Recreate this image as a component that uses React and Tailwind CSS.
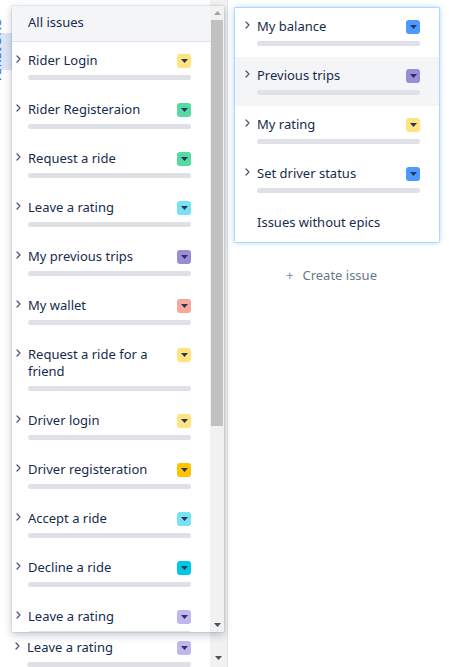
import React from "react";

const leftItems = [
  { title: "Rider Login", color: "bg-[#ffe380]" },
  { title: "Rider Registeraion", color: "bg-[#57d9a3]" },
  { title: "Request a ride", color: "bg-[#57d9a3]" },
  { title: "Leave a rating", color: "bg-[#79e2f2]" },
  { title: "My previous trips", color: "bg-[#998dd9]" },
  { title: "My wallet", color: "bg-[#f7a99c]" },
  { title: "Request a ride for a friend", color: "bg-[#ffe380]" },
  { title: "Driver login", color: "bg-[#ffe380]" },
  { title: "Driver registeration", color: "bg-[#ffc400]" },
  { title: "Accept a ride", color: "bg-[#79e2f2]" },
  { title: "Decline a ride", color: "bg-[#00c7e6]" },
  { title: "Leave a rating", color: "bg-[#c0b6f2]" },
];

const rightItems = [
  { title: "My balance", color: "bg-[#4c9aff]" },
  { title: "Previous trips", color: "bg-[#998dd9]", highlight: true },
  { title: "My rating", color: "bg-[#ffe380]" },
  { title: "Set driver status", color: "bg-[#4c9aff]" },
];

function Chevron() {
  return (
    <svg width="5" height="8" viewBox="0 0 5 8" className="block">
      <path d="M1 1l3 3-3 3" fill="none" stroke="#42526e" strokeWidth="1.2" strokeLinecap="round" strokeLinejoin="round" />
    </svg>
  );
}

function EpicIcon({ color }) {
  return (
    <span className={`mt-[2px] flex h-[14px] w-[14px] shrink-0 items-center justify-center rounded-[3px] ${color}`}>
      <svg width="7" height="4" viewBox="0 0 7 4" className="block">
        <path d="M0 0h7L3.5 4z" fill="#253858" />
      </svg>
    </span>
  );
}

function EpicItem({ title, color, highlight, pad }) {
  return (
    <div className={`flex ${pad} pr-[19px] pt-[10px] pb-[11px] ${highlight ? "bg-[#f4f5f7]" : ""}`}>
      <div className="w-[12px] shrink-0 pt-[3px]">
        <Chevron />
      </div>
      <div className="min-w-0 flex-1">
        <div className="flex items-start justify-between gap-[8px]">
          <span className="leading-[17px] text-[#172b4d]">{title}</span>
          <EpicIcon color={color} />
        </div>
        <div className="mt-[6px] h-[5px] rounded-full bg-[#dfe1e6]" />
      </div>
    </div>
  );
}

function ArrowUp() {
  return (
    <svg width="7" height="4" viewBox="0 0 7 4" className="block">
      <path d="M0 4h7L3.5 0z" fill="#a3a3a3" />
    </svg>
  );
}

function ArrowDown({ fill = "#505050" }) {
  return (
    <svg width="7" height="4" viewBox="0 0 7 4" className="block">
      <path d="M0 0h7L3.5 4z" fill={fill} />
    </svg>
  );
}

export default function App() {
  return (
    <div className="relative flex h-[667px] w-[449px] overflow-hidden bg-white font-['Noto_Sans',sans-serif] text-[13px] text-[#172b4d]">
      {/* background board column */}
      <div className="flex h-full w-[228px] shrink-0">
        <div className="flex min-w-0 flex-1 flex-col overflow-hidden">
          <div className="h-[80px] w-[12px] overflow-hidden bg-[linear-gradient(to_bottom,transparent_33px,#dbe5f6_33px,#dbe5f6_70px,transparent_70px)]">
            <div className="-ml-[9px] mt-[18px] rotate-180 text-[12px] leading-[12px] tracking-[1px] text-[#2f6fd6] [writing-mode:vertical-rl]">
              VERSIONS
            </div>
          </div>
          <div className="flex-1" />
          <div className="-mb-[11px]">
            <EpicItem title="Leave a rating" color="bg-[#c0b6f2]" pad="pl-[15px]" />
          </div>
        </div>
        <div className="flex w-[18px] shrink-0 flex-col justify-end border-r border-[#e4e4e4] bg-[#f1f1f1]">
          <div className="flex h-[18px] items-center justify-center">
            <ArrowDown />
          </div>
        </div>
      </div>

      {/* right column */}
      <div className="flex flex-1 flex-col pl-[7px] pt-[8px]">
        <div className="w-[204px] bg-white shadow-[0_0_0_1px_rgba(76,154,255,0.25),0_0_6px_rgba(76,154,255,0.55)]">
          {rightItems.map((it) => (
            <EpicItem key={it.title} {...it} pad="pl-[10px]" />
          ))}
          <div className="pl-[22px] pt-[10px] pb-[11px] leading-[17px] text-[#172b4d]">Issues without epics</div>
        </div>
        <div className="mt-[25px] flex items-center pl-[51px] leading-[17px] text-[#6b778c]">
          <span className="mr-[9px] text-[#8993a4]">+</span>
          <span>Create issue</span>
        </div>
      </div>

      {/* dropdown menu */}
      <div className="absolute left-[12px] top-[6px] flex h-[626px] w-[212px] bg-white shadow-[0_3px_8px_rgba(9,30,66,0.25),0_0_1px_rgba(9,30,66,0.35)]">
        <div className="min-w-0 flex-1 overflow-hidden">
          <div className="h-[36px] border-b border-[#dfe1e6] bg-[#f4f5f7] pl-[16px] leading-[33px] text-[#172b4d]">All issues</div>
          {leftItems.map((it, i) => (
            <EpicItem key={i} {...it} pad="pl-[4px]" />
          ))}
        </div>
        <div className="flex w-[14px] shrink-0 flex-col bg-[#f1f1f1]">
          <div className="flex h-[14px] items-center justify-center">
            <ArrowUp />
          </div>
          <div className="mx-[1px] h-[406px] bg-[#c1c1c1]" />
          <div className="flex-1" />
          <div className="flex h-[14px] items-center justify-center">
            <ArrowDown />
          </div>
        </div>
      </div>
    </div>
  );
}
